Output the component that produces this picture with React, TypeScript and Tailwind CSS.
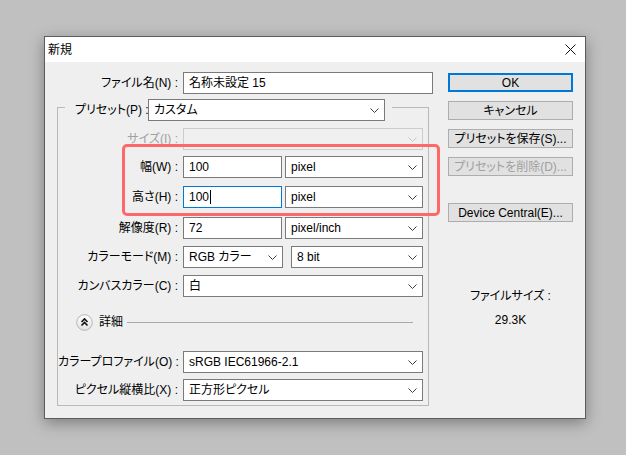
import React from "react";
import clsx from "clsx";

const Chevron = ({ disabled }: { disabled?: boolean }) => (
  <svg width="9" height="5" viewBox="0 0 9 5" className="shrink-0">
    <polyline
      points="0.5,0.5 4.5,4.5 8.5,0.5"
      fill="none"
      stroke={disabled ? "#c8c8c8" : "#3c3c3c"}
      strokeWidth="1"
    />
  </svg>
);

const Select = ({
  value,
  w,
  disabled,
}: {
  value?: string;
  w: string;
  disabled?: boolean;
}) => (
  <div
    className={clsx(
      "flex h-[22px] items-center justify-between border pl-[5px] pr-[5px]",
      w,
      disabled ? "border-[#cccccc] bg-[#f0f0f0]" : "border-[#7a7a7a] bg-white"
    )}
  >
    <span className="whitespace-nowrap">{value}</span>
    <Chevron disabled={disabled} />
  </div>
);

const TextBox = ({
  value,
  w,
  focused,
}: {
  value: string;
  w: string;
  focused?: boolean;
}) => (
  <div
    className={clsx(
      "flex h-[22px] items-center border bg-white pl-[5px]",
      w,
      focused ? "border-[#0078d7]" : "border-[#7a7a7a]"
    )}
  >
    <span className="whitespace-nowrap">{value}</span>
    {focused && <span className="ml-px h-[14px] w-px bg-black" />}
  </div>
);

const Label = ({
  text,
  w,
  disabled,
}: {
  text: string;
  w: string;
  disabled?: boolean;
}) => (
  <div
    className={clsx(
      "shrink-0 whitespace-nowrap text-right",
      w,
      disabled ? "text-[#a0a0a0]" : "text-black"
    )}
  >
    {text}
  </div>
);

const Button = ({
  text,
  primary,
  disabled,
  className,
}: {
  text: string;
  primary?: boolean;
  disabled?: boolean;
  className?: string;
}) => (
  <div
    className={clsx(
      "flex h-[19px] w-[125px] items-center justify-center bg-[#e1e1e1] whitespace-nowrap",
      primary ? "border-2 border-[#0078d7]" : "border border-[#adadad]",
      disabled ? "text-[#a0a0a0]" : "text-black",
      className
    )}
  >
    {text}
  </div>
);

const CollapseIcon = () => (
  <svg width="17" height="17" viewBox="0 0 17 17">
    <defs>
      <linearGradient id="cg" x1="0" y1="0" x2="0" y2="1">
        <stop offset="0" stopColor="#ffffff" />
        <stop offset="1" stopColor="#e2e2e2" />
      </linearGradient>
    </defs>
    <circle cx="8.5" cy="8.5" r="7.8" fill="url(#cg)" stroke="#b4b4b4" />
    <polyline points="5.5,8 8.5,5 11.5,8" fill="none" stroke="#111" strokeWidth="1.6" />
    <polyline points="5.5,11.5 8.5,8.5 11.5,11.5" fill="none" stroke="#111" strokeWidth="1.6" />
  </svg>
);

export default function App() {
  return (
    <div className="h-[455px] w-[626px] overflow-hidden bg-[#c0c0c0] pl-[44px] pt-[36px] font-['Liberation_Sans','Noto_Sans_CJK_JP',sans-serif] text-[12px] leading-[16px] text-black [font-feature-settings:'palt']">
      <div className="relative flex h-[383px] w-[542px] flex-col border border-[#5c5c5c] bg-[#efefef] shadow-[0_4px_14px_rgba(0,0,0,0.35)]">
        {/* title bar */}
        <div className="flex h-[25px] items-center justify-between bg-white pl-[3px] pr-[9px]">
          <span>新規</span>
          <svg width="11" height="11" viewBox="0 0 11 11">
            <path d="M0.5 0.5 L10.5 10.5 M10.5 0.5 L0.5 10.5" stroke="#111" strokeWidth="1" />
          </svg>
        </div>

        <div className="flex pt-[10px]">
          {/* left column */}
          <div className="flex w-[391px] flex-col">
            <div className="flex h-[22px] items-center">
              <Label text="ファイル名(N) :" w="w-[133px]" />
              <div className="ml-[5px]">
                <TextBox value="名称未設定 15" w="w-[250px]" />
              </div>
            </div>

            <div className="ml-[12px] mt-[13px] w-[372px] border border-[#b9b9b9] pb-[4px]">
              <div className="-mt-[9px] ml-[7px] flex w-[327px] items-center bg-[#efefef] pl-[10px] pr-[7px]">
                <Label text="プリセット(P) :" w="w-[71px]" />
                <div className="ml-[2px]">
                  <Select value="カスタム" w="w-[237px]" />
                </div>
              </div>

              <div className="mt-[7px] flex items-center">
                <Label text="サイズ(I) :" w="w-[120px]" disabled />
                <div className="ml-[5px]">
                  <Select w="w-[240px]" disabled />
                </div>
              </div>

              <div className="mt-[6px] flex items-center">
                <Label text="幅(W) :" w="w-[120px]" />
                <div className="ml-[5px] flex gap-[3px]">
                  <TextBox value="100" w="w-[99px]" />
                  <Select value="pixel" w="w-[138px]" />
                </div>
              </div>

              <div className="mt-[8px] flex items-center">
                <Label text="高さ(H) :" w="w-[120px]" />
                <div className="ml-[5px] flex gap-[3px]">
                  <TextBox value="100" w="w-[99px]" focused />
                  <Select value="pixel" w="w-[138px]" />
                </div>
              </div>

              <div className="mt-[9px] flex items-center">
                <Label text="解像度(R) :" w="w-[120px]" />
                <div className="ml-[5px] flex gap-[3px]">
                  <TextBox value="72" w="w-[99px]" />
                  <Select value="pixel/inch" w="w-[138px]" />
                </div>
              </div>

              <div className="mt-[7px] flex items-center">
                <Label text="カラーモード(M) :" w="w-[120px]" />
                <div className="ml-[5px] flex gap-[8px]">
                  <Select value="RGB カラー" w="w-[100px]" />
                  <Select value="8 bit" w="w-[132px]" />
                </div>
              </div>

              <div className="mt-[7px] flex items-center">
                <Label text="カンバスカラー(C) :" w="w-[120px]" />
                <div className="ml-[5px]">
                  <Select value="白" w="w-[240px]" />
                </div>
              </div>

              <div className="mr-[15px] mt-[17px] flex h-[16px] items-center pl-[18px]">
                <CollapseIcon />
                <span className="ml-[6px]">詳細</span>
                <div className="ml-[4px] h-px flex-1 bg-[#a8a8a8]" />
              </div>

              <div className="mt-[21px] flex items-center">
                <Label text="カラープロファイル(O) :" w="w-[120px]" />
                <div className="ml-[5px]">
                  <Select value="sRGB IEC61966-2.1" w="w-[240px]" />
                </div>
              </div>

              <div className="mt-[6px] flex items-center">
                <Label text="ピクセル縦横比(X) :" w="w-[120px]" />
                <div className="ml-[5px]">
                  <Select value="正方形ピクセル" w="w-[240px]" />
                </div>
              </div>
            </div>
          </div>

          {/* right column */}
          <div className="ml-[12px] mt-px flex flex-col items-center">
            <div className="flex flex-col gap-[9px]">
              <Button text="OK" primary />
              <Button text="キャンセル" />
              <Button text="プリセットを保存(S)..." />
              <Button text="プリセットを削除(D)..." disabled />
            </div>
            <Button text="Device Central(E)..." className="mt-[27px]" />
            <div className="mt-[66px]">ファイルサイズ :</div>
            <div className="mt-[8px]">29.3K</div>
          </div>
        </div>

        {/* highlight annotation */}
        <div className="absolute left-[77px] top-[107px] h-[72px] w-[318px] rounded-[5px] border-[3px] border-[#ff6868]" />
      </div>
    </div>
  );
}
